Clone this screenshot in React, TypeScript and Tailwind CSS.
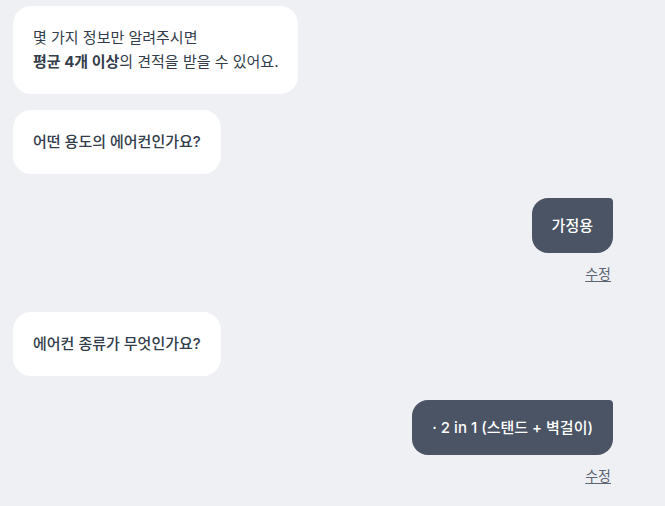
import React from "react";

const font = { fontFamily: 'Inter, "Noto Sans CJK KR", sans-serif' };

function Left({ children }: { children: React.ReactNode }) {
  return (
    <div className="flex justify-start">
      <div className="bg-white rounded-[18px] px-5 py-5 text-[15px] leading-[24px] text-[#333d4b]">
        {children}
      </div>
    </div>
  );
}

function Right({ children }: { children: React.ReactNode }) {
  return (
    <div className="flex flex-col items-end">
      <div className="bg-[#4a5464] rounded-[16px] rounded-tr-[4px] px-5 py-4 text-[15px] leading-[23px] font-medium text-white">
        {children}
      </div>
      <button className="mt-[11px] text-[14px] leading-[20px] text-[#5b6472] underline underline-offset-2 mr-[2px]">
        수정
      </button>
    </div>
  );
}

export default function App() {
  return (
    <div className="w-[665px] h-[506px] overflow-hidden bg-[#eff0f4]" style={font}>
      <div className="flex flex-col pl-[13px] pr-[52px] pt-[6px]">
        <Left>
          <div>몇 가지 정보만 알려주시면</div>
          <div>
            <span className="font-bold">평균 4개 이상</span>의 견적을 받을 수 있어요.
          </div>
        </Left>
        <div className="h-4" />
        <Left>
          <div className="font-medium">어떤 용도의 에어컨인가요?</div>
        </Left>
        <div className="h-6" />
        <Right>가정용</Right>
        <div className="h-[28px]" />
        <Left>
          <div className="font-medium">에어컨 종류가 무엇인가요?</div>
        </Left>
        <div className="h-6" />
        <Right>· 2 in 1 (스탠드 + 벽걸이)</Right>
      </div>
    </div>
  );
}
